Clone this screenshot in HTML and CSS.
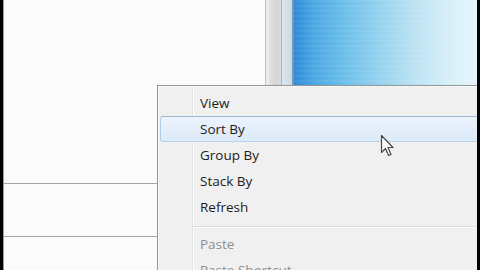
FILE: index.html
```html
<!DOCTYPE html>
<html>
<head>
<meta charset="utf-8">
<link rel="stylesheet" href="styles.css">
</head>
<body>
<div class="screen">
  <div class="panel">
    <div class="pane pane-top"></div>
    <div class="pane pane-mid"></div>
    <div class="pane pane-bot"></div>
  </div>
  <div class="frame">
    <div class="frame-a"></div>
    <div class="frame-b"></div>
    <div class="frame-c"></div>
    <div class="frame-d"></div>
    <div class="frame-e"></div>
    <div class="frame-f"></div>
  </div>
  <div class="desktop"></div>

  <div class="menu">
    <div class="item">View</div>
    <div class="item hot">Sort By</div>
    <div class="item">Group By</div>
    <div class="item">Stack By</div>
    <div class="item">Refresh</div>
    <div class="sep"></div>
    <div class="item off">Paste</div>
    <div class="item off">Paste Shortcut</div>
  </div>

  <svg class="cursor" width="14" height="24" viewBox="0 0 14 24">
    <path d="M1.5 1.5 L1.5 18.5 L5.5 14.5 L8.5 21.5 L11 20.5 L8 13.5 L13 13.5 Z" fill="#fafafa" stroke="#4a4a4a" stroke-width="1.2" stroke-linejoin="round"/>
  </svg>
</div>
</body>
</html>
```
FILE: styles.css
```css
html, body {
  margin: 0;
  padding: 0;
  background: #000;
}
body {
  width: 480px;
  height: 270px;
  overflow: hidden;
  font-family: "Segoe UI", "Open Sans", "Liberation Sans", sans-serif;
}
.screen {
  position: relative;
  display: flex;
  width: 474px;
  height: 270px;
  margin: 0 3px;
  overflow: hidden;
  background: #fbfbfb;
}
.panel {
  width: 261px;
  display: flex;
  flex-direction: column;
  background: #fbfbfb;
  border-left: 1px solid #9a9a9a;
}
.pane-top {
  height: 183px;
  border-bottom: 1px solid #a6a6a6;
}
.pane-mid {
  height: 52px;
  border-bottom: 1px solid #a6a6a6;
}
.pane-bot {
  flex: 1;
}
.frame {
  width: 29px;
  display: flex;
}
.frame-a { width: 1px; background: #c4c4c4; }
.frame-b { width: 3px; background: #ececec; }
.frame-c { width: 12px; background: linear-gradient(to right, #e2e2e2, #d6d6d6 60%, #dcdcdc); }
.frame-d { width: 1px; background: #b0b4b8; }
.frame-e { width: 10px; background: linear-gradient(to right, #dde8f0, #c6d9e8); }
.frame-f { width: 2px; background: #7d96ae; }
.desktop {
  flex: 1;
  background:
    repeating-linear-gradient(to bottom, rgba(255,255,255,0.06) 0 2px, rgba(255,255,255,0) 2px 5px),
    linear-gradient(to right, #3089d8 0%, #4aa6e2 10%, #6ec0ea 28%, #98d4ef 48%, #bfe4f4 68%, #d8eff8 86%, #e6f4fa 100%);
}
.menu {
  position: absolute;
  left: 154px;
  top: 85px;
  right: -20px;
  bottom: -30px;
  border: 1px solid #979797;
  padding: 4px 2px;
  background:
    linear-gradient(to right, transparent 34px, #e0e1e1 34px, #e0e1e1 35px, #ffffff 35px, #ffffff 36px, transparent 36px),
    #f0f0f0;
  box-shadow: inset 0 0 0 1px #f7f7f7, 2px 2px 3px rgba(0,0,0,0.18);
}
.item {
  height: 24px;
  line-height: 24px;
  padding-left: 39px;
  border: 1px solid transparent;
  border-radius: 3px;
  font-size: 13.5px;
  color: #1c1c1c;
  white-space: nowrap;
}
.item.hot {
  border-color: #9eb6cf #b2cde8 #b6d3ee #b2cde8;
  background: linear-gradient(to bottom, #ecf4fd, #dce9f7);
}
.item.off {
  color: #8e8e8e;
}
.sep {
  height: 1px;
  margin: 6px 0 3px 33px;
  border-bottom: 1px solid #ffffff;
  background: #dcdcdc;
}
.cursor {
  position: absolute;
  left: 377px;
  top: 134px;
}
```
